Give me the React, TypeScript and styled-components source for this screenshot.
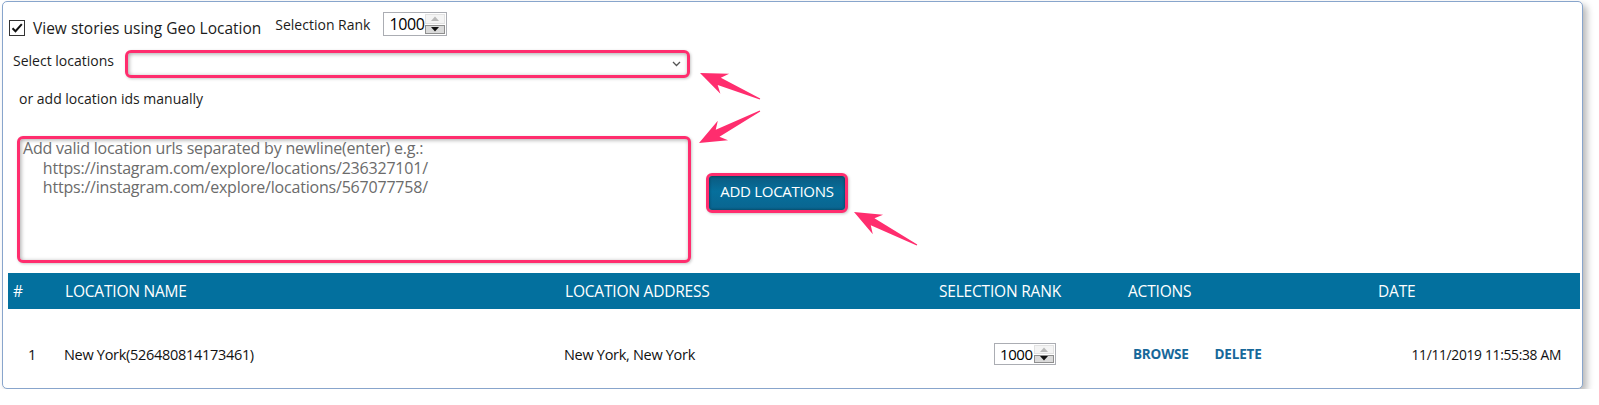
import React from 'react';
import styled, { createGlobalStyle } from 'styled-components';

const GlobalStyle = createGlobalStyle`
    body {
        margin: 0;
        background: #ffffff;
        font-family: 'Open Sans', 'Noto Sans', sans-serif;
        color: #1b1b1b;
    }
`;

const PINK = '#ff2d6e';
const BLUE = '#03709e';

const Window = styled.div`
    position: relative;
    box-sizing: border-box;
    margin: 1px 0 0 2px;
    width: 1581px;
    height: 388px;
    border: 1px solid #88a5cc;
    border-radius: 5px;
    background: #ffffff;
    box-shadow: 4px 4px 7px rgba(0, 0, 0, 0.28);
    display: flex;
    flex-direction: column;
`;

const TopRow = styled.div`
    display: flex;
    align-items: center;
    height: 24px;
    margin-top: 10px;
    padding-left: 6px;
`;

const CheckGroup = styled.label`
    display: flex;
    align-items: center;
    gap: 8px;
    padding-top: 7px;
    font-size: 15.5px;
    margin-right: 14px;
`;

const CheckBox = styled.span`
    box-sizing: border-box;
    width: 16px;
    height: 16px;
    border: 1px solid #333333;
    background: #ffffff;
    display: flex;
    align-items: center;
    justify-content: center;
`;

const SmallLabel = styled.span<{ $mr?: number }>`
    font-size: 14px;
    margin-right: ${p => p.$mr || 0}px;
`;

const SpinBox = styled.div<{ $w: number; $h: number }>`
    box-sizing: border-box;
    width: ${p => p.$w}px;
    height: ${p => p.$h}px;
    border: 1px solid #abadb3;
    background: #ffffff;
    display: flex;
    align-items: stretch;
`;

const SpinValue = styled.span<{ $size: number }>`
    flex: 1;
    display: flex;
    align-items: center;
    padding-left: 5px;
    font-size: ${p => p.$size}px;
    letter-spacing: -0.4px;
    color: #000000;
`;

const SpinButtons = styled.div`
    width: 20px;
    display: flex;
    flex-direction: column;
    padding: 1px 1px 1px 0;
    gap: 1px;
`;

const SpinButton = styled.div<{ $down?: boolean }>`
    flex: 1;
    display: flex;
    align-items: center;
    justify-content: center;
    background: ${p => (p.$down ? '#dadada' : '#f4f4f4')};
    border: 1px solid ${p => (p.$down ? '#8f8f8f' : '#e2e2e2')};
`;

const SelectRow = styled.div`
    display: flex;
    align-items: flex-start;
    margin-top: 16px;
    padding-left: 10px;
`;

const SelectLabel = styled.span`
    font-size: 14px;
    line-height: 18px;
    margin-right: 11px;
`;

const PinkFrame = styled.div<{ $w: number; $h: number; $mt?: number; $ml?: number }>`
    box-sizing: border-box;
    flex: none;
    width: ${p => p.$w}px;
    height: ${p => p.$h}px;
    margin-top: ${p => p.$mt || 0}px;
    margin-left: ${p => p.$ml || 0}px;
    border: 3px solid ${PINK};
    border-radius: 6px;
    background: #ffffff;
    box-shadow: inset 1px 1px 4px rgba(0, 0, 0, 0.35),
        1px 1px 3px rgba(0, 0, 0, 0.22);
    display: flex;
    overflow: hidden;
`;

const FakeSelect = styled.div`
    flex: 1;
    display: flex;
    align-items: center;
    justify-content: flex-end;
    padding-right: 6px;
`;

const ManualText = styled.div`
    margin-top: 11px;
    padding-left: 16px;
    font-size: 14px;
    line-height: 20px;
`;

const EntryRow = styled.div`
    display: flex;
    align-items: flex-start;
    margin-top: 27px;
    padding-left: 14px;
`;

const UrlArea = styled.textarea`
    flex: 1;
    border: none;
    outline: none;
    resize: none;
    background: transparent;
    padding: 0 3px;
    font-family: 'Open Sans', 'Noto Sans', sans-serif;
    font-size: 16px;
    line-height: 19.5px;
    letter-spacing: -0.2px;
    &::placeholder {
        color: #6b6b6b;
        opacity: 1;
    }
`;

const AddButton = styled.button`
    flex: 1;
    border: none;
    background: linear-gradient(#0b5a80, #066f9c 45%, #0a6590);
    box-shadow: inset 0 0 3px rgba(0, 0, 0, 0.5);
    color: #ffffff;
    font-family: 'Open Sans', 'Noto Sans', sans-serif;
    font-size: 15px;
    letter-spacing: -0.3px;
    padding: 0 0 4px;
`;

const Table = styled.div`
    margin: 10px 2px 0 5px;
`;

const COLUMNS = '52px 500px 374px 189px 250px 207px';

const HeaderRow = styled.div`
    display: grid;
    grid-template-columns: ${COLUMNS};
    align-items: center;
    height: 36px;
    background: ${BLUE};
    color: #ffffff;
    font-size: 15.5px;
    letter-spacing: -0.2px;
`;

const HeaderCell = styled.div`
    padding-left: 5px;
`;

const BodyRow = styled.div`
    display: grid;
    grid-template-columns: ${COLUMNS};
    align-items: center;
    padding-top: 35px;
    font-size: 14.5px;
    letter-spacing: -0.3px;
    color: #111111;
`;

const Cell = styled.div<{ $pl?: number; $right?: boolean }>`
    display: flex;
    align-items: center;
    height: 20px;
    padding-left: ${p => (p.$pl === undefined ? 4 : p.$pl)}px;
    padding-right: ${p => (p.$right ? 19 : 0)}px;
    justify-content: ${p => (p.$right ? 'flex-end' : 'flex-start')};
`;

const DateText = styled.span`
    font-size: 13.8px;
`;

const ActionLink = styled.a<{ $mr?: number }>`
    font-weight: 700;
    font-size: 13.5px;
    letter-spacing: -0.2px;
    color: #17689a;
    text-decoration: none;
    margin-right: ${p => p.$mr || 0}px;
`;

const Overlay = styled.svg`
    position: absolute;
    left: 0;
    top: 0;
    width: 100%;
    height: 100%;
    pointer-events: none;
    overflow: visible;
`;

const Arrow = ({ tip, tail }: { tip: [number, number]; tail: [number, number] }) => {
    // tapered annotation arrow, coordinates in window space
    const dx = tail[0] - tip[0];
    const dy = tail[1] - tip[1];
    const len = Math.hypot(dx, dy);
    const ux = dx / len;
    const uy = dy / len;
    const nx = -uy;
    const ny = ux;
    const at = (d: number, w: number) =>
        `${tip[0] + ux * d + nx * w},${tip[1] + uy * d + ny * w}`;
    const points = [
        at(0, 0),
        at(27, 11),
        at(21, 4),
        at(len, 0.6),
        at(len, -0.6),
        at(21, -4),
        at(27, -11),
    ].join(' ');
    return <polygon points={points} fill={PINK} />;
};

const Chevron = () => (
    <svg width="9" height="6" viewBox="0 0 9 6">
        <path d="M1 1l3.5 3.5L8 1" fill="none" stroke="#555" strokeWidth="1.3" />
    </svg>
);

const Tick = () => (
    <svg width="12" height="12" viewBox="0 0 12 12">
        <path d="M1.5 6.2l3 3L10.8 2.2" fill="none" stroke="#111" strokeWidth="2" />
    </svg>
);

const Spinner = ({ w, h, size }: { w: number; h: number; size: number }) => (
    <SpinBox $w={w} $h={h}>
        <SpinValue $size={size}>1000</SpinValue>
        <SpinButtons>
            <SpinButton>
                <svg width="8" height="5" viewBox="0 0 8 5">
                    <path d="M0 5L4 0.5L8 5Z" fill="#b9b9b9" />
                </svg>
            </SpinButton>
            <SpinButton $down>
                <svg width="8" height="5" viewBox="0 0 8 5">
                    <path d="M0 0L4 4.5L8 0Z" fill="#111" />
                </svg>
            </SpinButton>
        </SpinButtons>
    </SpinBox>
);

const placeholder =
    'Add valid location urls separated by newline(enter) e.g.:\n' +
    '     https://instagram.com/explore/locations/236327101/\n' +
    '     https://instagram.com/explore/locations/567077758/';

const App = () => {
    return (
        <>
            <GlobalStyle />
            <Window>
                <TopRow>
                    <CheckGroup>
                        <CheckBox>
                            <Tick />
                        </CheckBox>
                        View stories using Geo Location
                    </CheckGroup>
                    <SmallLabel $mr={13}>Selection Rank</SmallLabel>
                    <Spinner w={64} h={24} size={16} />
                </TopRow>
                <SelectRow>
                    <SelectLabel>Select locations</SelectLabel>
                    <PinkFrame $w={565} $h={28} $mt={-2}>
                        <FakeSelect>
                            <Chevron />
                        </FakeSelect>
                    </PinkFrame>
                </SelectRow>
                <ManualText>or add location ids manually</ManualText>
                <EntryRow>
                    <PinkFrame $w={674} $h={127}>
                        <UrlArea placeholder={placeholder} />
                    </PinkFrame>
                    <PinkFrame $w={142} $h={40} $mt={37} $ml={15}>
                        <AddButton>ADD LOCATIONS</AddButton>
                    </PinkFrame>
                </EntryRow>
                <Table>
                    <HeaderRow>
                        <HeaderCell>#</HeaderCell>
                        <HeaderCell>LOCATION NAME</HeaderCell>
                        <HeaderCell>LOCATION ADDRESS</HeaderCell>
                        <HeaderCell>SELECTION RANK</HeaderCell>
                        <HeaderCell>ACTIONS</HeaderCell>
                        <HeaderCell>DATE</HeaderCell>
                    </HeaderRow>
                    <BodyRow>
                        <Cell $pl={20}>1</Cell>
                        <Cell>New York(526480814173461)</Cell>
                        <Cell>New York, New York</Cell>
                        <Cell $pl={60}>
                            <Spinner w={62} h={22} size={15} />
                        </Cell>
                        <Cell $pl={10}>
                            <ActionLink href="#" $mr={26}>BROWSE</ActionLink>
                            <ActionLink href="#">DELETE</ActionLink>
                        </Cell>
                        <Cell $right>
                            <DateText>11/11/2019 11:55:38 AM</DateText>
                        </Cell>
                    </BodyRow>
                </Table>
                <Overlay>
                    <Arrow tip={[697, 71]} tail={[757, 97]} />
                    <Arrow tip={[696, 141]} tail={[757, 109]} />
                    <Arrow tip={[851, 210]} tail={[914, 243]} />
                </Overlay>
            </Window>
        </>
    );
};

export default App;
